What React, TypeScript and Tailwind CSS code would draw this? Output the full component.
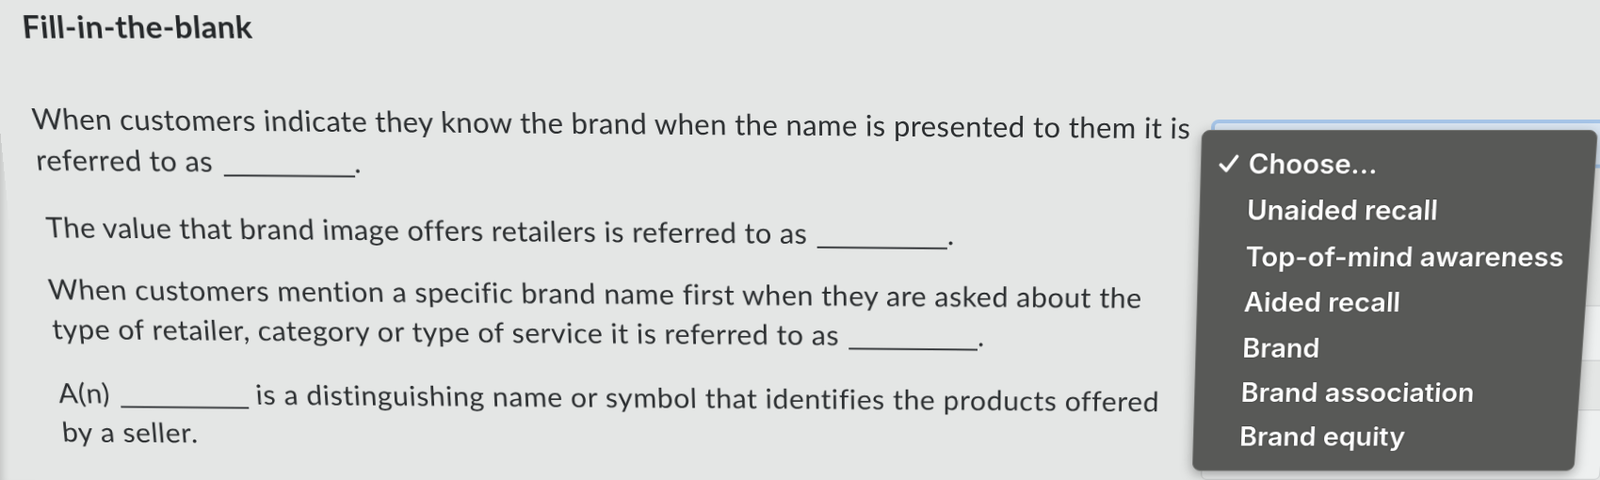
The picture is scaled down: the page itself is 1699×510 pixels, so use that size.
const options = [
  "Unaided recall",
  "Top-of-mind awareness",
  "Aided recall",
  "Brand",
  "Brand association",
  "Brand equity",
];

function Blank() {
  return (
    <span className="inline-block w-[140px] h-0 border-b-2 border-[#2f3235] align-[-5px] ml-[2px]" />
  );
}

function CheckMark() {
  return (
    <svg viewBox="0 0 22 20" className="w-[22px] h-[20px]" fill="none">
      <path
        d="M2.5 11.5 L8.5 17.5 L19.5 2.5"
        stroke="#ffffff"
        strokeWidth="3.6"
        strokeLinecap="round"
        strokeLinejoin="round"
      />
    </svg>
  );
}

export default function App() {
  return (
    <div className="relative w-[1699px] h-[510px] overflow-hidden bg-[#e4e6e5] shadow-[inset_10px_0_10px_-8px_rgba(0,0,0,0.18)]">
      {/* page, seen slightly from above like the photo */}
      <div className="relative w-[1699px] h-[540px] bg-[#e4e6e5] text-[#2c2f31] font-['Lato','Liberation_Sans',sans-serif] origin-[996px_137px] [transform:perspective(1000px)_rotateX(-5.7deg)]">
        <div className="pt-[8px] pl-[34px]">
          <h1 className="text-[33px] leading-[40px] font-bold tracking-[0.35px] text-[#25282a]">
            Fill-in-the-blank
          </h1>
        </div>

        <div className="mt-[55px] pl-[35px] whitespace-nowrap text-[31px] leading-[44px] tracking-[0.4px] origin-top-left skew-y-[0.47deg]">
          <p>
            When customers indicate they know the brand when the name is presented to them it is
            <br />
            referred to as <Blank />.
          </p>
          <p className="mt-[29px] pl-[4px]">
            The value that brand image offers retailers is referred to as <Blank />.
          </p>
          <p className="mt-[24px] tracking-[0.5px]">
            When customers mention a specific brand name first when they are asked about the
            <br />
            type of retailer, category or type of service it is referred to as <Blank />.
          </p>
          <p className="mt-[28px] tracking-[0.6px]">
            A(n) <Blank /> is a distinguishing name or symbol that identifies the products offered
            <br />
            by a seller.
          </p>
        </div>

        {/* Select boxes, mostly under the open menu */}
        <div className="absolute left-[1286px] top-[127px] w-[440px] flex flex-col">
          <div className="h-[52px] rounded-lg border-[4px] border-[#a6c5e8] bg-[#dbe7f3]" />
          <div className="mt-[150px] h-[62px] rounded-md border border-[#c9cbcc] bg-[#eef0f0]" />
          <div className="mt-[55px] h-[80px] rounded-md border border-[#c9cbcc] bg-[#eef0f0]" />
        </div>

        {/* Open dropdown menu */}
        <div className="absolute left-[1276px] top-[138px] w-[421px] h-[378px] rounded-[9px] bg-[#585957] border border-[#767775] shadow-[0_4px_14px_rgba(0,0,0,0.35)] pt-[10px] font-['Inter','Liberation_Sans',sans-serif] text-[29.5px] leading-[50.4px] font-semibold text-white [text-shadow:0_0_2px_rgba(0,0,0,0.6)]">
          <div className="flex items-center pl-[18px] gap-[10px]">
            <CheckMark />
            <span>Choose...</span>
          </div>
          {options.map((o) => (
            <div key={o} className="pl-[50px]">
              {o}
            </div>
          ))}
        </div>
      </div>
    </div>
  );
}
